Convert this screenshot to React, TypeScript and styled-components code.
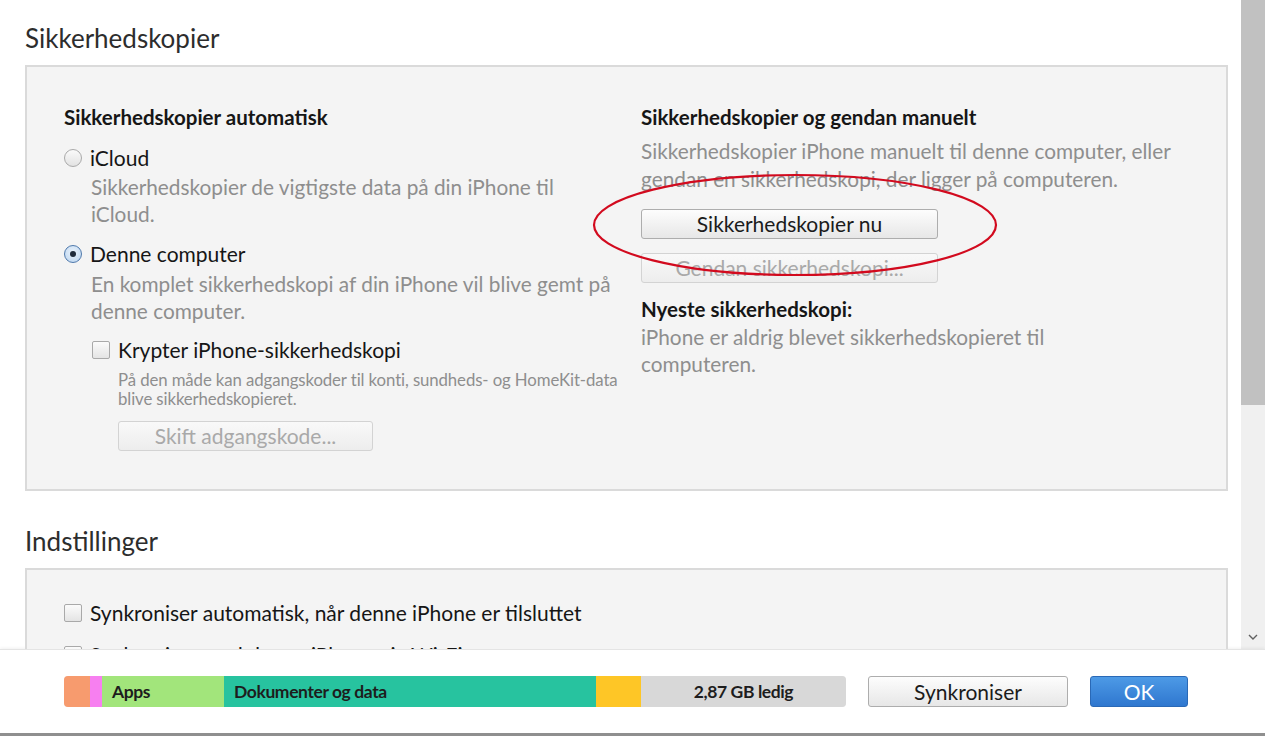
import styled, { createGlobalStyle } from 'styled-components';

const GlobalStyle = createGlobalStyle`
  html, body {
    margin: 0;
    padding: 0;
    background: #ffffff;
  }
  body {
    font-family: Lato, "Open Sans", "DejaVu Sans", sans-serif;
    color: #1b1b1b;
  }
`;

const storage = [
  { key: 'other', color: '#f79b6e', width: 26 },
  { key: 'photos', color: '#f77ff0', width: 12 },
  { key: 'apps', color: '#a2e57b', width: 122, label: 'Apps' },
  { key: 'docs', color: '#27c39f', width: 372, label: 'Dokumenter og data' },
  { key: 'misc', color: '#fec626', width: 45 },
  { key: 'free', color: '#d8d8d8', width: 205, label: '2,87 GB ledig', center: true },
];

const Window = styled.div`
  height: 736px;
  display: flex;
  flex-direction: column;
  overflow: hidden;
  background: #ffffff;
`;

const ScrollArea = styled.div`
  flex: 1;
  min-height: 0;
  display: flex;
  overflow: hidden;
`;

const Content = styled.div`
  flex: 1;
  padding: 23px 13px 0 25px;
`;

const SectionTitle = styled.h2<{ $first?: boolean }>`
  margin: ${({ $first }) => ($first ? '0' : '35px')} 0 12px;
  font-size: 26px;
  line-height: 30px;
  font-weight: 400;
  color: #2d2d2d;
`;

const Panel = styled.div<{ $pad?: string }>`
  position: relative;
  border: 2px solid #dadada;
  background: #f4f4f4;
  padding: ${({ $pad }) => $pad || '37px 36px 38px 37px'};
`;

const Columns = styled.div`
  display: grid;
  grid-template-columns: 577px 1fr;
`;

const Column = styled.div`
  display: flex;
  flex-direction: column;
  align-items: flex-start;
`;

const GroupTitle = styled.div<{ $gap?: number }>`
  font-size: 20.5px;
  line-height: 27px;
  font-weight: 700;
  color: #161616;
  margin-top: ${({ $gap }) => $gap ?? 0}px;
`;

const OptionRow = styled.label<{ $gap?: number; $indent?: number }>`
  display: flex;
  align-items: center;
  gap: 8px;
  font-size: 21px;
  line-height: 27px;
  color: #161616;
  white-space: nowrap;
  margin-top: ${({ $gap }) => $gap ?? 0}px;
  margin-left: ${({ $indent }) => $indent ?? 0}px;
`;

const Note = styled.p<{ $indent?: number; $gap?: number; $lh?: number }>`
  margin: ${({ $gap }) => $gap ?? 0}px 0 0 ${({ $indent }) => $indent ?? 0}px;
  font-size: 20.8px;
  line-height: ${({ $lh }) => $lh ?? 27}px;
  color: #8e8e8e;
  white-space: nowrap;
`;

const SmallNote = styled.p`
  margin: 7px 0 0 54px;
  font-size: 16.8px;
  line-height: 19px;
  letter-spacing: -0.1px;
  color: #8e8e8e;
  white-space: nowrap;
`;

const Radio = styled.span<{ $checked?: boolean }>`
  position: relative;
  width: 16px;
  height: 16px;
  flex: none;
  border-radius: 50%;
  border: 1px solid ${({ $checked }) => ($checked ? '#4f79ac' : '#a9a9a9')};
  background: ${({ $checked }) =>
    $checked
      ? 'radial-gradient(circle at 50% 40%, #eaf3fc 0%, #b9d3ee 100%)'
      : 'linear-gradient(#fafafa, #e2e2e2)'};
  &::after {
    content: '';
    display: ${({ $checked }) => ($checked ? 'block' : 'none')};
    position: absolute;
    left: 5px;
    top: 5px;
    width: 6px;
    height: 6px;
    border-radius: 50%;
    background: #1f2b3b;
  }
`;

const Checkbox = styled.span`
  width: 16px;
  height: 16px;
  flex: none;
  border-radius: 2px;
  border: 1px solid #a9a9a9;
  background: linear-gradient(#fbfbfb, #e4e4e4);
`;

const Button = styled.button<{ $width: number; $gap?: number; $indent?: number }>`
  width: ${({ $width }) => $width}px;
  height: 30px;
  margin: ${({ $gap }) => $gap ?? 0}px 0 0 ${({ $indent }) => $indent ?? 0}px;
  padding: 0;
  border: 1px solid #adadad;
  border-radius: 3px;
  background: linear-gradient(#fdfdfd, #e7e7e7);
  font-family: inherit;
  font-size: 21px;
  line-height: 28px;
  color: #1b1b1b;
  &:disabled {
    border-color: #d3d3d3;
    background: linear-gradient(#f9f9f9, #ededed);
    color: #a9a9a9;
  }
`;

const Highlight = styled.svg`
  position: absolute;
  left: 563px;
  top: 105px;
  width: 410px;
  height: 106px;
  overflow: visible;
  pointer-events: none;
`;

const Scrollbar = styled.div`
  width: 24px;
  flex: none;
  display: flex;
  flex-direction: column;
  background: #f0f0f0;
`;

const Thumb = styled.div`
  height: 405px;
  background: #c1c1c1;
`;

const Track = styled.div`
  flex: 1;
  display: flex;
  align-items: flex-end;
  justify-content: center;
  padding-bottom: 9px;
`;

const BottomBar = styled.div`
  height: 83px;
  flex: none;
  display: flex;
  align-items: center;
  padding: 0 0 0 64px;
  gap: 22px;
  background: #ffffff;
  border-top: 1px solid #e4e4e4;
  border-bottom: 3px solid #8f8f8f;
  box-shadow: 0 -1px 3px rgba(0, 0, 0, 0.06);
`;

const StorageBar = styled.div`
  display: flex;
  height: 31px;
  border-radius: 4px;
  overflow: hidden;
  box-shadow: inset 0 0 0 1px rgba(0, 0, 0, 0.08);
`;

const Segment = styled.div<{ $color: string; $center?: boolean }>`
  display: flex;
  align-items: center;
  justify-content: ${({ $center }) => ($center ? 'center' : 'flex-start')};
  padding-left: ${({ $center }) => ($center ? 0 : 10)}px;
  box-sizing: border-box;
  background: ${({ $color }) => $color};
  font-size: 17.5px;
  font-weight: 700;
  letter-spacing: -0.4px;
  color: #1d1d1d;
  white-space: nowrap;
`;

const SyncButton = styled(Button)`
  height: 31px;
`;

const OkButton = styled.button`
  width: 98px;
  height: 31px;
  border: 1px solid #2a69b6;
  border-radius: 3px;
  background: linear-gradient(#4d9ae6, #2f77cf);
  color: #ffffff;
  font-family: inherit;
  font-size: 21px;
  line-height: 28px;
`;

export default function App() {
  return (
    <>
      <GlobalStyle />
      <Window>
        <ScrollArea>
          <Content>
            <SectionTitle $first>Sikkerhedskopier</SectionTitle>
            <Panel>
              <Columns>
                <Column>
                  <GroupTitle>Sikkerhedskopier automatisk</GroupTitle>
                  <OptionRow $gap={13}>
                    <Radio />
                    iCloud
                  </OptionRow>
                  <Note $indent={27} $gap={2}>
                    Sikkerhedskopier de vigtigste data på din iPhone til
                    <br />
                    iCloud.
                  </Note>
                  <OptionRow $gap={13}>
                    <Radio $checked />
                    Denne computer
                  </OptionRow>
                  <Note $indent={27} $gap={3}>
                    En komplet sikkerhedskopi af din iPhone vil blive gemt på
                    <br />
                    denne computer.
                  </Note>
                  <OptionRow $gap={12} $indent={28}>
                    <Checkbox />
                    Krypter iPhone-sikkerhedskopi
                  </OptionRow>
                  <SmallNote>
                    På den måde kan adgangskoder til konti, sundheds- og HomeKit-data
                    <br />
                    blive sikkerhedskopieret.
                  </SmallNote>
                  <Button $width={255} $gap={13} $indent={54} disabled>
                    Skift adgangskode...
                  </Button>
                </Column>
                <Column>
                  <GroupTitle>Sikkerhedskopier og gendan manuelt</GroupTitle>
                  <Note $gap={6} $lh={28}>
                    Sikkerhedskopier iPhone manuelt til denne computer, eller
                    <br />
                    gendan en sikkerhedskopi, der ligger på computeren.
                  </Note>
                  <Button $width={297} $gap={16}>
                    Sikkerhedskopier nu
                  </Button>
                  <Button $width={297} $gap={14} disabled>
                    Gendan sikkerhedskopi...
                  </Button>
                  <GroupTitle $gap={13}>Nyeste sikkerhedskopi:</GroupTitle>
                  <Note>
                    iPhone er aldrig blevet sikkerhedskopieret til
                    <br />
                    computeren.
                  </Note>
                </Column>
              </Columns>
              <Highlight viewBox="0 0 410 106">
                <ellipse cx="205" cy="53" rx="201" ry="50" fill="none" stroke="#d20a1e" strokeWidth="2.2" />
              </Highlight>
            </Panel>

            <SectionTitle>Indstillinger</SectionTitle>
            <Panel $pad="29px 36px 40px 37px">
              <OptionRow>
                <Checkbox />
                Synkroniser automatisk, når denne iPhone er tilsluttet
              </OptionRow>
              <OptionRow $gap={15}>
                <Checkbox />
                Synkroniser med denne iPhone via Wi-Fi
              </OptionRow>
            </Panel>
          </Content>
          <Scrollbar>
            <Thumb />
            <Track>
              <svg width="10" height="6" viewBox="0 0 10 6">
                <path d="M1 1l4 4 4-4" fill="none" stroke="#606060" strokeWidth="1.4" />
              </svg>
            </Track>
          </Scrollbar>
        </ScrollArea>
        <BottomBar>
          <StorageBar>
            {storage.map(s => (
              <Segment key={s.key} $color={s.color} $center={s.center} style={{ width: s.width }}>
                {s.label}
              </Segment>
            ))}
          </StorageBar>
          <SyncButton $width={200}>Synkroniser</SyncButton>
          <OkButton>OK</OkButton>
        </BottomBar>
      </Window>
    </>
  );
}
